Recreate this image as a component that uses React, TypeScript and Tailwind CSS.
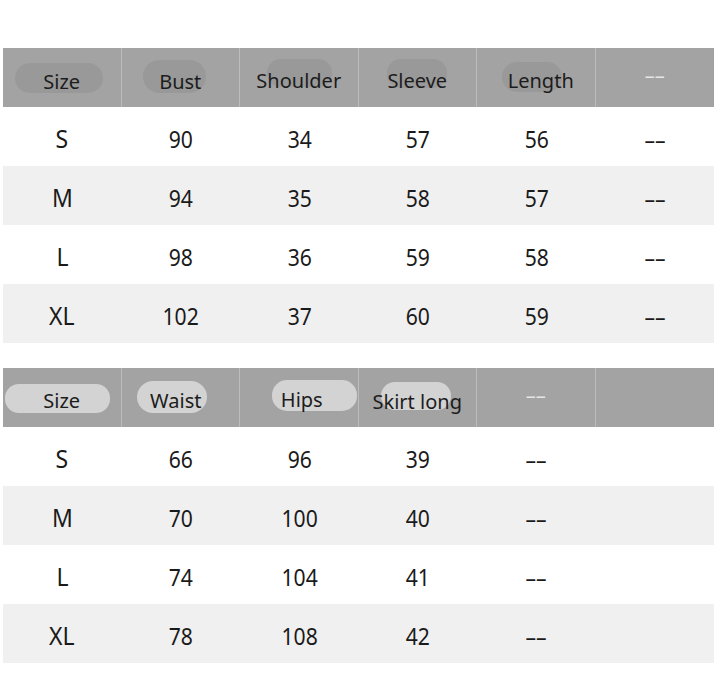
import React from "react";

type Head = { label: string; blob?: string; dash?: boolean; shift?: string };

const head1: Head[] = [
  { label: "Size", blob: "left-[12px] top-[15px] w-[88px] h-[30px] rounded-[15px]", shift: "mt-[2px]" },
  { label: "Bust", blob: "left-[21px] top-[12px] w-[63px] h-[33px] rounded-[17px]", shift: "mt-[3px]" },
  { label: "Shoulder", blob: "left-[27px] top-[11px] w-[65px] h-[28px] rounded-[14px]", shift: "" },
  { label: "Sleeve", blob: "left-[28px] top-[11px] w-[60px] h-[29px] rounded-[14px]", shift: "" },
  { label: "Length", blob: "left-[25px] top-[14px] w-[60px] h-[30px] rounded-[15px]", shift: "ml-[10px] mt-[1px]" },
  { label: "––", dash: true },
];

const head2: Head[] = [
  { label: "Size", blob: "left-[2px] top-[16px] w-[105px] h-[29px] rounded-[14px]", shift: "mt-[1px]" },
  { label: "Waist", blob: "left-[15px] top-[13px] w-[70px] h-[32px] rounded-[16px]", shift: "-ml-[9px]" },
  { label: "Hips", blob: "left-[32px] top-[12px] w-[85px] h-[31px] rounded-[15px]", shift: "ml-[6px] -mt-[1px]" },
  { label: "Skirt long", blob: "left-[22px] top-[14px] w-[70px] h-[28px] rounded-[14px]", shift: "mt-[2px]" },
  { label: "––", dash: true },
  { label: "" },
];

const rows1 = [
  ["S", "90", "34", "57", "56", "––"],
  ["M", "94", "35", "58", "57", "––"],
  ["L", "98", "36", "59", "58", "––"],
  ["XL", "102", "37", "60", "59", "––"],
];

const rows2 = [
  ["S", "66", "96", "39", "––", ""],
  ["M", "70", "100", "40", "––", ""],
  ["L", "74", "104", "41", "––", ""],
  ["XL", "78", "108", "42", "––", ""],
];

const font = { fontFamily: '"Noto Sans", "Open Sans", sans-serif' };

function Table({ head, rows, light }: { head: Head[]; rows: string[][]; light: boolean }) {
  return (
    <div className="w-[711px]">
      <div className="grid grid-cols-6 h-[59px] bg-[#a3a3a3]">
        {head.map((h, i) => (
          <div
            key={i}
            className={
              "relative flex items-center justify-center pt-[6px] " +
              (i < 5 ? "border-r border-[#bcbcbc]" : "")
            }
          >
            {h.blob && (
              <div
                className={
                  "absolute " + h.blob + " " + (light ? "bg-[#d3d3d3]" : "bg-[#999999]")
                }
              />
            )}
            <span
              className={
                "relative text-[20px] leading-none " +
                (h.dash ? "text-[#e6e6e6] -mt-[10px]" : "text-[#1c1c1c] " + (h.shift ?? ""))
              }
              style={font}
            >
              {h.label}
            </span>
          </div>
        ))}
      </div>
      {rows.map((r, ri) => (
        <div
          key={ri}
          className={"grid grid-cols-6 h-[59px] " + (ri % 2 === 1 ? "bg-[#f0f0f0]" : "bg-white")}
        >
          {r.map((c, ci) => (
            <div key={ci} className="flex items-center justify-center pt-[4px]">
              <span
                className={
                  "text-[#1a1a1a] leading-none " +
                  (ci === 0 ? "text-[25px] scale-x-[0.92]" : "text-[24px] scale-x-[0.88]")
                }
                style={font}
              >
                {c}
              </span>
            </div>
          ))}
        </div>
      ))}
    </div>
  );
}

export default function App() {
  return (
    <div className="w-[723px] h-[681px] bg-white pt-[48px] pl-[3px]">
      <Table head={head1} rows={rows1} light={false} />
      <div className="h-[25px]" />
      <Table head={head2} rows={rows2} light={true} />
    </div>
  );
}
